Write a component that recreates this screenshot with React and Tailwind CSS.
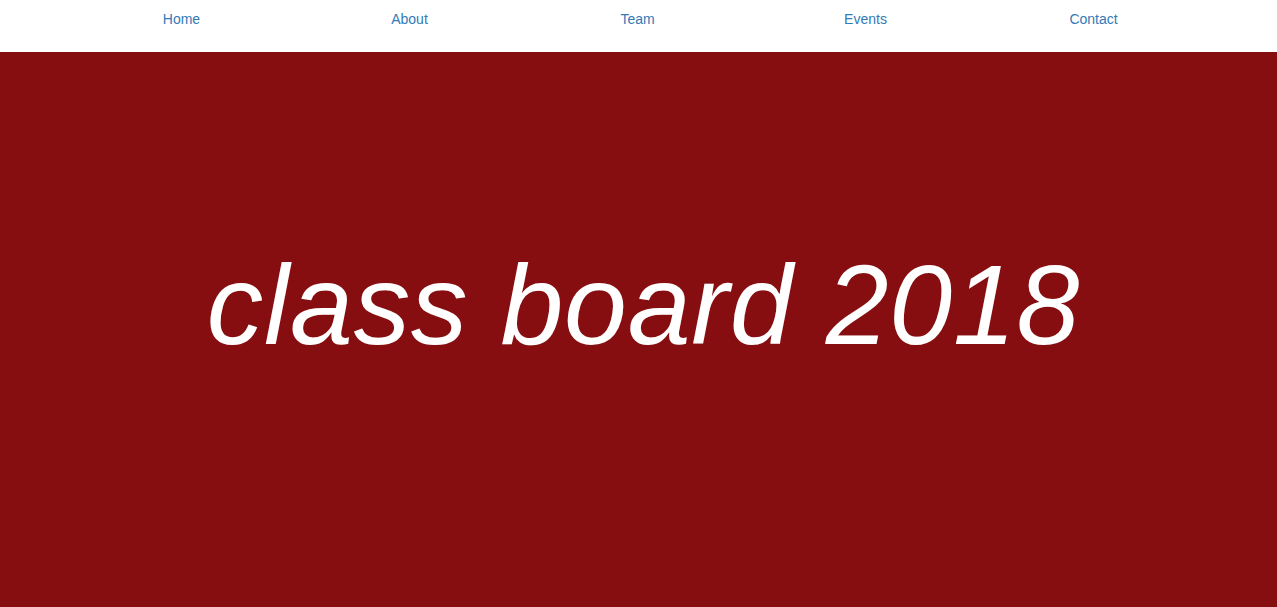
import React from 'react';

const links = ['Home', 'About', 'Team', 'Events', 'Contact'];

export default function App() {
  return (
    <div className="min-h-screen bg-white" style={{ fontFamily: '"Liberation Sans", Arial, sans-serif' }}>
      {/* Top navigation */}
      <nav className="h-[52px] bg-white">
        <ul className="mx-auto grid w-[1140px] -translate-x-[1px] grid-cols-5 pt-[7px]">
          {links.map((l) => (
            <li key={l} className="text-center">
              <a href="#" className="text-[14px] leading-[20px] text-[#337ab7] hover:underline">
                {l}
              </a>
            </li>
          ))}
        </ul>
      </nav>

      {/* Hero */}
      <section className="h-[555px] bg-[#870e10] pt-[197px]">
        <h1 className="pl-[10px] text-center text-[113px] font-light italic leading-none tracking-[0.8px] text-white">
          class board 2018
        </h1>
      </section>
    </div>
  );
}
